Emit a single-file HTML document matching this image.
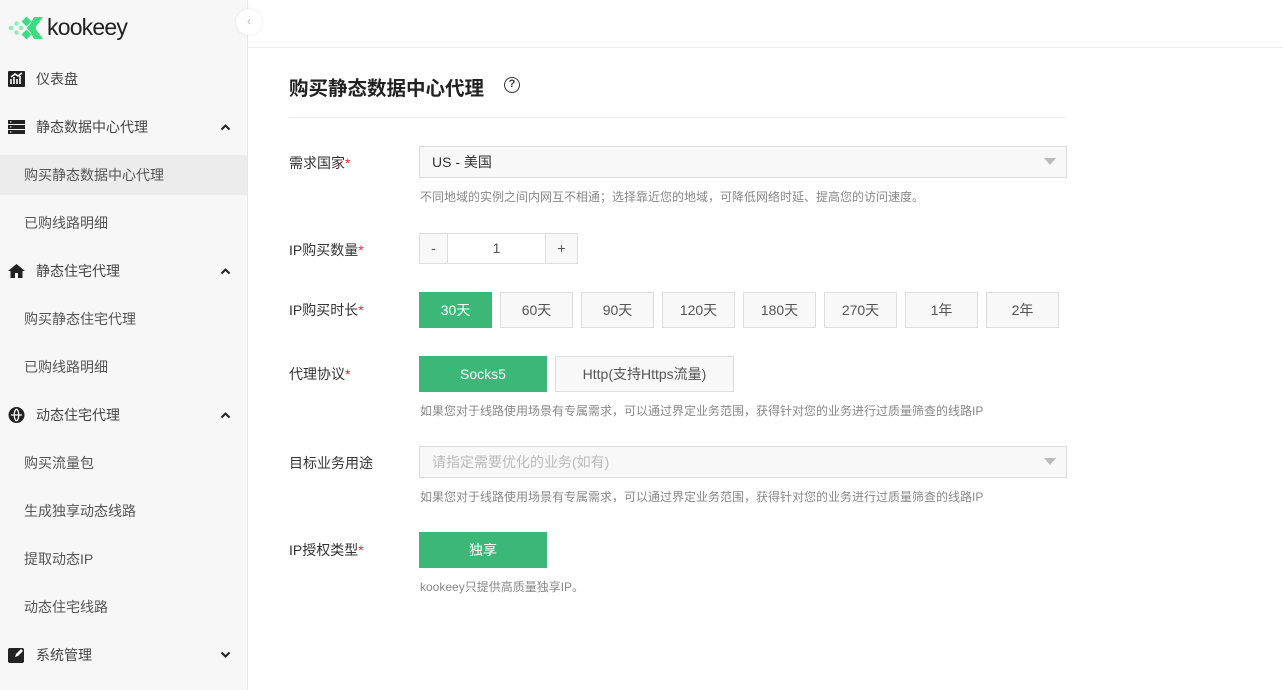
<!DOCTYPE html>
<html><head><meta charset="utf-8"><style>
*{box-sizing:border-box;margin:0;padding:0}
body{width:1283px;height:690px;overflow:hidden;background:#fff;font-family:"Liberation Sans","Noto Sans CJK SC",sans-serif;position:relative;color:#333}
.side{position:absolute;left:0;top:0;width:248px;height:690px;background:#f7f7f7;border-right:1px solid #e8e8e8}
.item{position:absolute;left:0;width:247px;height:40px;line-height:40px;font-size:14px;color:#444}
.item .ic{position:absolute;left:8px;top:12px;width:17px;height:16px}
.item .t{position:absolute;left:36px}
.sub .t{left:24px;color:#555}
.arr{position:absolute;right:16px;top:16px;width:11px;height:8px}
.sel{background:#ececec}
.hdr{position:absolute;left:248px;top:47px;right:0;border-top:1px solid #eee}
.abs{position:absolute}
.lbl{position:absolute;left:289px;font-size:14px;color:#333}
.lbl i{color:#f5222d;font-style:normal}
.box{position:absolute;border:1px solid #ddd;background:#f8f8f8;font-size:14px;color:#555;text-align:center}
.g{background:#3bb878;border-color:#3bb878;color:#fff}
.hint{position:absolute;left:420px;font-size:12px;color:#888}
.tri{position:absolute;right:10px;top:11px;width:0;height:0;border-left:6px solid transparent;border-right:6px solid transparent;border-top:7px solid #bbb}
</style></head><body>
<div class="side">
 <svg class="abs" style="left:8px;top:15px" width="36" height="26" viewBox="0 0 36 26">
  <g fill="#3ddc84"><rect x="15" y="3" width="7" height="7" transform="rotate(45 18.5 6.5)"/><rect x="15" y="16" width="7" height="7" transform="rotate(45 18.5 19.5)"/><rect x="20" y="9.5" width="7" height="7" transform="rotate(45 23.5 13)"/><path d="M26 2h9l-8 11 8 11h-9l-6-11z"/></g>
  <g fill="#8ef0b8"><circle cx="3" cy="13" r="2.3"/><circle cx="8.5" cy="8.5" r="2.3"/><circle cx="8.5" cy="17.5" r="2.3"/><circle cx="13" cy="13" r="2.3"/></g>
 </svg>
 <div class="abs" style="left:47px;top:14px;font-size:23px;color:#222;letter-spacing:-0.8px">kookeey</div>
 <div class="abs" style="left:236px;top:9px;width:26px;height:26px;border-radius:50%;background:#fff;box-shadow:0 0 3px rgba(0,0,0,.1);text-align:center;line-height:24px;color:#bbb;font-size:12px">‹</div>
 <div class="item" style="top:59px"><svg class="ic" viewBox="0 0 17 16"><rect width="17" height="16" rx="1" fill="#222"/><path d="M3 13V8M6 13V6M9 13V8M12 13V5M3 6l4-3 3 2 4-3" stroke="#fff" stroke-width="1.6" fill="none"/></svg><span class="t">仪表盘</span></div>
 <div class="item" style="top:107px"><svg class="ic" viewBox="0 0 17 16"><rect y="1" width="17" height="4" fill="#222"/><rect y="6" width="17" height="4" fill="#222"/><rect y="11" width="17" height="4" fill="#222"/><rect x="2" y="2.5" width="1.5" height="1" fill="#fff"/><rect x="2" y="7.5" width="1.5" height="1" fill="#fff"/><rect x="2" y="12.5" width="1.5" height="1" fill="#fff"/></svg><span class="t">静态数据中心代理</span><svg class="arr" viewBox="0 0 11 8"><path d="M1.5 6.5l4-4 4 4" stroke="#222" stroke-width="2" fill="none"/></svg></div>
 <div class="item sub sel" style="top:155px"><span class="t">购买静态数据中心代理</span></div>
 <div class="item sub" style="top:203px"><span class="t">已购线路明细</span></div>
 <div class="item" style="top:251px"><svg class="ic" viewBox="0 0 17 16"><path d="M8.5 1L0 8h2.5v7h4.5v-5h3v5h4.5V8H17z" fill="#222"/></svg><span class="t">静态住宅代理</span><svg class="arr" viewBox="0 0 11 8"><path d="M1.5 6.5l4-4 4 4" stroke="#222" stroke-width="2" fill="none"/></svg></div>
 <div class="item sub" style="top:299px"><span class="t">购买静态住宅代理</span></div>
 <div class="item sub" style="top:347px"><span class="t">已购线路明细</span></div>
 <div class="item" style="top:395px"><svg class="ic" viewBox="0 0 17 16"><circle cx="8.5" cy="8" r="8" fill="#222"/><path d="M3 8h11M8.5 2c-3 2-3 10 0 12M8.5 2c3 2 3 10 0 12" stroke="#fff" stroke-width="1.3" fill="none"/></svg><span class="t">动态住宅代理</span><svg class="arr" viewBox="0 0 11 8"><path d="M1.5 6.5l4-4 4 4" stroke="#222" stroke-width="2" fill="none"/></svg></div>
 <div class="item sub" style="top:443px"><span class="t">购买流量包</span></div>
 <div class="item sub" style="top:491px"><span class="t">生成独享动态线路</span></div>
 <div class="item sub" style="top:539px"><span class="t">提取动态IP</span></div>
 <div class="item sub" style="top:587px"><span class="t">动态住宅线路</span></div>
 <div class="item" style="top:635px"><svg class="ic" viewBox="0 0 17 16"><rect y="1" width="16" height="15" rx="2" fill="#222"/><path d="M7 10l1-3 5-5 2 2-5 5z" fill="#fff"/></svg><span class="t">系统管理</span><svg class="arr" viewBox="0 0 11 8"><path d="M1.5 1.5l4 4 4-4" stroke="#222" stroke-width="2" fill="none"/></svg></div>
</div>
<div class="hdr"></div>
<div class="abs" style="left:289px;top:72px;font-size:19.5px;font-weight:bold;color:#222">购买静态数据中心代理</div>
<div class="abs" style="left:504px;top:77px;width:16px;height:16px;border:1.5px solid #333;border-radius:50%;font-size:11px;text-align:center;line-height:13px;font-weight:bold">?</div>
<div class="abs" style="left:289px;top:117px;width:778px;border-top:1px solid #f0f0f0"></div>

<div class="lbl" style="top:153px">需求国家<i>*</i></div>
<div class="box" style="left:419px;top:146px;width:648px;height:32px;text-align:left;padding-left:12px;line-height:30px;color:#333">US - 美国<span class="tri"></span></div>
<div class="hint" style="top:188px">不同地域的实例之间内网互不相通；选择靠近您的地域，可降低网络时延、提高您的访问速度。</div>

<div class="lbl" style="top:240px">IP购买数量<i>*</i></div>
<div class="box" style="left:419px;top:233px;width:29px;height:31px;line-height:29px">-</div>
<div class="box" style="left:447px;top:233px;width:99px;height:31px;line-height:29px;background:#fff">1</div>
<div class="box" style="left:545px;top:233px;width:33px;height:31px;line-height:29px">+</div>

<div class="lbl" style="top:300px">IP购买时长<i>*</i></div>
<div class="box g" style="left:419px;top:292px;width:73px;height:36px;line-height:34px">30天</div>
<div class="box" style="left:500px;top:292px;width:73px;height:36px;line-height:34px">60天</div>
<div class="box" style="left:581px;top:292px;width:73px;height:36px;line-height:34px">90天</div>
<div class="box" style="left:662px;top:292px;width:73px;height:36px;line-height:34px">120天</div>
<div class="box" style="left:743px;top:292px;width:73px;height:36px;line-height:34px">180天</div>
<div class="box" style="left:824px;top:292px;width:73px;height:36px;line-height:34px">270天</div>
<div class="box" style="left:905px;top:292px;width:73px;height:36px;line-height:34px">1年</div>
<div class="box" style="left:986px;top:292px;width:73px;height:36px;line-height:34px">2年</div>

<div class="lbl" style="top:364px">代理协议<i>*</i></div>
<div class="box g" style="left:419px;top:356px;width:128px;height:36px;line-height:34px">Socks5</div>
<div class="box" style="left:555px;top:356px;width:179px;height:36px;line-height:34px">Http(支持Https流量)</div>
<div class="hint" style="top:402px">如果您对于线路使用场景有专属需求，可以通过界定业务范围，获得针对您的业务进行过质量筛查的线路IP</div>

<div class="lbl" style="top:453px">目标业务用途</div>
<div class="box" style="left:419px;top:446px;width:648px;height:32px;text-align:left;padding-left:12px;line-height:30px;color:#bbb">请指定需要优化的业务(如有)<span class="tri"></span></div>
<div class="hint" style="top:488px">如果您对于线路使用场景有专属需求，可以通过界定业务范围，获得针对您的业务进行过质量筛查的线路IP</div>

<div class="lbl" style="top:540px">IP授权类型<i>*</i></div>
<div class="box g" style="left:419px;top:532px;width:128px;height:36px;line-height:34px">独享</div>
<div class="hint" style="top:578px">kookeey只提供高质量独享IP。</div>
</body></html>
